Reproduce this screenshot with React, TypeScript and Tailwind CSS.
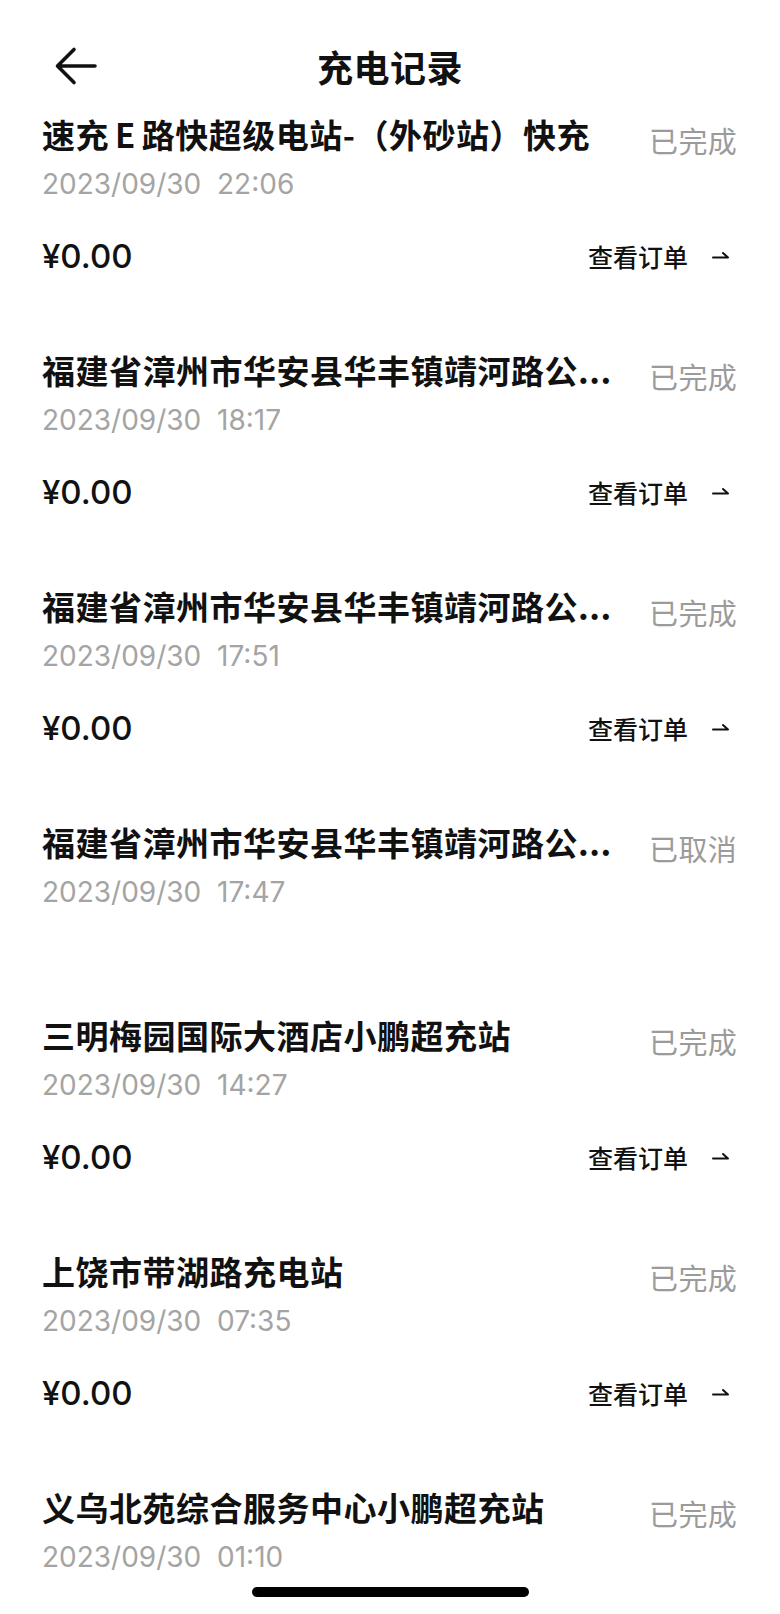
import React from "react";

type Item = {
  title: React.ReactNode;
  time: string;
  status: string;
  price?: boolean;
};

const CJK = '"Noto Sans CJK SC", "Noto Sans", sans-serif';
const NUM = 'Inter, "Liberation Sans", sans-serif';

const longName = "福建省漳州市华安县华丰镇靖河路公...";

const items: Item[] = [
  {
    title: (
      <>
        速充<span className="mx-[6px]">E</span>路快超级电站-（外砂站）快充
      </>
    ),
    time: "2023/09/30\u00a0\u00a022:06",
    status: "已完成",
    price: true,
  },
  { title: longName, time: "2023/09/30\u00a0\u00a018:17", status: "已完成", price: true },
  { title: longName, time: "2023/09/30\u00a0\u00a017:51", status: "已完成", price: true },
  { title: longName, time: "2023/09/30\u00a0\u00a017:47", status: "已取消", price: false },
  { title: "三明梅园国际大酒店小鹏超充站", time: "2023/09/30\u00a0\u00a014:27", status: "已完成", price: true },
  { title: "上饶市带湖路充电站", time: "2023/09/30\u00a0\u00a007:35", status: "已完成", price: true },
  { title: "义乌北苑综合服务中心小鹏超充站", time: "2023/09/30\u00a0\u00a001:10", status: "已完成", price: false },
];

function Harpoon() {
  return (
    <svg width="18" height="14" viewBox="0 0 18 14" fill="none" className="block">
      <path d="M1 10.5 H16 L11 6" stroke="#111" strokeWidth="2" strokeLinecap="round" strokeLinejoin="round" />
    </svg>
  );
}

function Row({ item }: { item: Item }) {
  return (
    <div className={item.price ? "pt-[13px] pb-[57px]" : "pt-[13px] pb-[88px]"}>
      <div className="flex h-[44px] items-start justify-between">
        <div
          className="text-[33px] leading-[44px] font-semibold tracking-[0.5px] text-[#111] whitespace-nowrap"
          style={{ fontFamily: CJK }}
        >
          {item.title}
        </div>
        <div
          className="pt-[6px] text-[29px] leading-[44px] tracking-[0.3px] text-[#9b9b9b] whitespace-nowrap"
          style={{ fontFamily: CJK }}
        >
          {item.status}
        </div>
      </div>
      <div
        className="mt-[8px] h-[40px] text-[28px] leading-[40px] text-[#a4a4a4] whitespace-nowrap"
        style={{ fontFamily: NUM }}
      >
        {item.time}
      </div>
      {item.price && (
        <div className="mt-[30px] flex h-[44px] items-center justify-between">
          <div className="text-[33px] leading-[44px] font-medium text-[#111]" style={{ fontFamily: NUM }}>
            ¥0.00
          </div>
          <div className="mr-[7px] flex items-center">
            <span className="text-[25px] leading-[44px] font-medium text-[#111]" style={{ fontFamily: CJK }}>
              查看订单
            </span>
            <span className="ml-[24px] mt-[-4px]">
              <Harpoon />
            </span>
          </div>
        </div>
      )}
    </div>
  );
}

export default function App() {
  return (
    <div className="relative h-[1614px] w-full overflow-hidden bg-white">
      <div className="mt-[33px] grid h-[66px] grid-cols-[1fr_auto_1fr] items-center">
        <div className="pl-[54px]">
          <svg width="44" height="40" viewBox="0 0 44 40" fill="none" className="block">
            <path
              d="M41 20 H4 M20 3.5 L3.5 20 L20 36.5"
              stroke="#111"
              strokeWidth="3.6"
              strokeLinecap="round"
              strokeLinejoin="round"
            />
          </svg>
        </div>
        <div
          className="text-[36px] leading-[44px] font-semibold text-[#111] tracking-[0.5px]"
          style={{ fontFamily: CJK }}
        >
          充电记录
        </div>
        <div />
      </div>
      <div className="pl-[42px] pr-[43px]">
        {items.map((it, i) => (
          <Row key={i} item={it} />
        ))}
      </div>
      <div className="absolute bottom-[17px] left-0 right-0 flex justify-center">
        <div className="h-[10px] w-[277px] rounded-full bg-black" />
      </div>
    </div>
  );
}
